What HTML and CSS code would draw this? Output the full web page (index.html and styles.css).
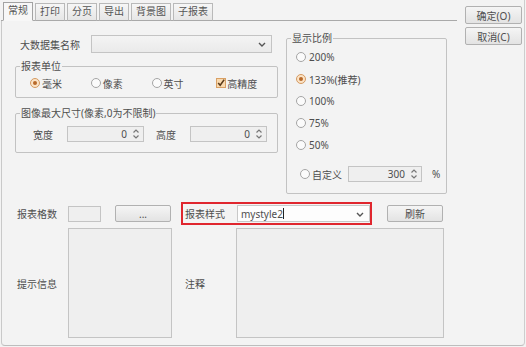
FILE: index.html
```html
<!DOCTYPE html>
<html lang="zh-CN">
<head>
  <meta charset="UTF-8">
  <title>报表属性</title>
  <link rel="stylesheet" href="styles.css">
</head>
<body>
  <div class="window">
    <div class="main">
      <div class="tabbar">
        <span class="tab active">常规</span>
        <span class="tab">打印</span>
        <span class="tab">分页</span>
        <span class="tab">导出</span>
        <span class="tab">背景图</span>
        <span class="tab">子报表</span>
      </div>

      <div class="page">
        <div class="top">
          <div class="left-col">
            <div class="name-row">
              <span class="name-label">大数据集名称</span>
              <div class="select name-select">
                <svg class="chev" width="8" height="5" viewBox="0 0 8 5"><polyline points="1,1 4,4 7,1" fill="none" stroke="#555" stroke-width="1.4"/></svg>
              </div>
            </div>

            <fieldset class="group unit">
              <legend>报表单位</legend>
              <div class="unit-row">
                <span class="opt"><i class="radio on"></i>毫米</span>
                <span class="opt"><i class="radio"></i>像素</span>
                <span class="opt"><i class="radio"></i>英寸</span>
                <span class="opt check-opt">
                  <svg class="check" width="10" height="10" viewBox="0 0 10 10"><rect x="0.5" y="0.5" width="9" height="9" fill="#f9d9ae" stroke="#d9a064"/><polyline points="2.2,5 4.2,7.2 8.2,1.6" fill="none" stroke="#5a3a1a" stroke-width="1.6"/></svg>高精度
                </span>
              </div>
            </fieldset>

            <fieldset class="group size">
              <legend>图像最大尺寸(像素,0为不限制)</legend>
              <div class="size-row">
                <span class="size-label">宽度</span>
                <div class="spin size-spin">
                  <span class="val">0</span>
                  <svg class="arrows" width="8" height="12" viewBox="0 0 8 12"><polyline points="1.5,4.5 4,2 6.5,4.5" fill="none" stroke="#777" stroke-width="1.2"/><polyline points="1.5,7.5 4,10 6.5,7.5" fill="none" stroke="#777" stroke-width="1.2"/></svg>
                </div>
                <span class="size-label second">高度</span>
                <div class="spin size-spin">
                  <span class="val">0</span>
                  <svg class="arrows" width="8" height="12" viewBox="0 0 8 12"><polyline points="1.5,4.5 4,2 6.5,4.5" fill="none" stroke="#777" stroke-width="1.2"/><polyline points="1.5,7.5 4,10 6.5,7.5" fill="none" stroke="#777" stroke-width="1.2"/></svg>
                </div>
              </div>
            </fieldset>
          </div>

          <fieldset class="group scale">
            <legend>显示比例</legend>
            <div class="scale-list">
              <div class="scale-opt"><i class="radio"></i>200%</div>
              <div class="scale-opt"><i class="radio on"></i>133%(推荐)</div>
              <div class="scale-opt"><i class="radio"></i>100%</div>
              <div class="scale-opt"><i class="radio"></i>75%</div>
              <div class="scale-opt"><i class="radio"></i>50%</div>
              <div class="custom-row">
                <span class="opt custom-opt"><i class="radio"></i>自定义</span>
                <div class="spin custom-spin">
                  <span class="val">300</span>
                  <svg class="arrows" width="8" height="12" viewBox="0 0 8 12"><polyline points="1.5,4.5 4,2 6.5,4.5" fill="none" stroke="#777" stroke-width="1.2"/><polyline points="1.5,7.5 4,10 6.5,7.5" fill="none" stroke="#777" stroke-width="1.2"/></svg>
                </div>
                <span class="pct">%</span>
              </div>
            </div>
          </fieldset>
        </div>

        <div class="style-row">
          <span class="row-label">报表格数</span>
          <div class="small-box"></div>
          <button class="btn dots">...</button>
          <div class="highlight">
            <span class="style-label">报表样式</span>
            <div class="select style-select">
              <span class="style-val">mystyle2</span><span class="caret"></span>
              <svg class="chev" width="8" height="5" viewBox="0 0 8 5"><polyline points="1,1 4,4 7,1" fill="none" stroke="#555" stroke-width="1.4"/></svg>
            </div>
          </div>
          <button class="btn refresh">刷新</button>
        </div>

        <div class="memo-row">
          <span class="row-label">提示信息</span>
          <div class="memo tip"></div>
          <span class="note-label">注释</span>
          <div class="memo note"></div>
        </div>
      </div>
    </div>

    <div class="side">
      <button class="btn side-btn">确定(O)</button>
      <button class="btn side-btn">取消(C)</button>
    </div>
  </div>
</body>
</html>
```

FILE: styles.css
```css
body {
  margin: 0;
  background: #f3f3f3;
  font-family: "Noto Sans", "Noto Sans CJK SC", sans-serif;
  font-size: 10px;
  color: #4e4e4e;
}

.window {
  display: flex;
  width: 525px;
  height: 346px;
}

.main {
  width: 456px;
  margin-left: 1px;
}

/* tab strip */
.tabbar {
  height: 21px;
  box-sizing: border-box;
  padding-left: 2px;
  display: flex;
  align-items: flex-end;
  gap: 2px;
  border-bottom: 1px solid #a9a9a9;
}

.tab {
  height: 16px;
  line-height: 15px;
  padding: 0 4px;
  margin-bottom: -1px;
  border: 1px solid #b9b9b9;
  border-bottom-color: #a9a9a9;
  background: linear-gradient(#f6f6f6, #e6e6e6);
  color: #555;
}

.tab.active {
  height: 17px;
  background: #f7f7f7;
  border-color: #a3a3a3;
  border-bottom-color: #f7f7f7;
}

.page {
  height: 325px;
  box-sizing: border-box;
  padding: 10px 0 0 13px;
  border-left: 1px solid #c9c9c9;
  border-bottom: 1px solid #bdbdbd;
  border-bottom-left-radius: 4px;
  background: #f3f3f3;
}

.top {
  display: flex;
  gap: 8px;
  align-items: flex-start;
}

.left-col {
  width: 263px;
  padding-top: 4px;
}

.name-row {
  display: flex;
  align-items: center;
  height: 18px;
}

.name-label {
  width: 71px;
  padding-left: 5px;
}

/* group boxes */
.group {
  margin: 0;
  padding: 0;
  min-width: 0;
  border: 1px solid #c2c2c2;
  border-radius: 2px;
}

.group legend {
  margin-left: 4px;
  padding: 0 1px;
  line-height: 14px;
}

.unit {
  margin-top: 6px;
}

.unit-row {
  display: flex;
  align-items: center;
  height: 14px;
  padding: 3px 0 7px 14px;
}

.opt {
  display: flex;
  align-items: center;
  width: 61px;
}

.check-opt {
  margin-left: 4px;
}

.check {
  margin-right: 1px;
}

.radio {
  display: inline-block;
  width: 8px;
  height: 8px;
  margin-right: 2px;
  border: 1px solid #a5a5a5;
  border-radius: 50%;
  background: #fbfbfb;
  position: relative;
}

.radio.on {
  border-color: #d49a62;
  background: #fbe3c6;
}

.radio.on::after {
  content: "";
  position: absolute;
  left: 2px;
  top: 2px;
  width: 4px;
  height: 4px;
  border-radius: 50%;
  background: #b8692a;
}

.size {
  margin-top: 8px;
}

.size-row {
  display: flex;
  align-items: center;
  padding: 6px 0 10px 17px;
}

.size-label {
  width: 34px;
}

.size-label.second {
  margin-left: 12px;
}

/* inputs */
.select,
.spin,
.small-box,
.memo {
  box-sizing: border-box;
  border: 1px solid #c4c4c4;
  background: #efefef;
}

.select {
  display: flex;
  align-items: center;
  height: 18px;
  position: relative;
}

.name-select {
  width: 181px;
  background: linear-gradient(#f4f4f4, #eaeaea);
}

.chev {
  position: absolute;
  right: 5px;
  top: 6px;
}

.spin {
  display: flex;
  align-items: center;
  justify-content: flex-end;
  height: 16px;
  padding-right: 3px;
}

.size-spin {
  width: 77px;
}

.val {
  margin-right: 5px;
}

.scale {
  width: 161px;
  box-sizing: border-box;
}

.scale-list {
  padding: 1px 0 11px 9px;
}

.scale-opt {
  display: flex;
  align-items: center;
  height: 22px;
}

.scale-opt .radio {
  margin-right: 3px;
}

.custom-row {
  display: flex;
  align-items: center;
  height: 16px;
  margin-top: 10px;
  padding-left: 4px;
}

.custom-opt {
  width: 48px;
}

.custom-spin {
  width: 74px;
}

.pct {
  margin-left: 10px;
}

/* bottom rows */
.style-row {
  display: flex;
  align-items: center;
  height: 23px;
  margin-top: 8px;
  padding-left: 2px;
}

.row-label {
  width: 51px;
}

.small-box {
  width: 33px;
  height: 16px;
}

.btn {
  box-sizing: border-box;
  height: 17px;
  padding: 0;
  border: 1px solid #b1b1b1;
  border-radius: 2px;
  background: linear-gradient(#f5f5f5, #e3e3e3);
  font-family: "Noto Sans", "Noto Sans CJK SC", sans-serif;
  font-size: 10px;
  color: #4e4e4e;
}

.dots {
  width: 56px;
  margin-left: 14px;
  line-height: 10px;
}

.highlight {
  display: flex;
  align-items: center;
  width: 191px;
  height: 23px;
  box-sizing: border-box;
  margin-left: 10px;
  padding-left: 2px;
  border: 2px solid #e0262e;
}

.style-label {
  width: 52px;
}

.style-select {
  width: 133px;
  height: 17px;
  background: #fdfdfd;
  border-color: #c8c8c8;
  padding-left: 3px;
}

.caret {
  width: 1px;
  height: 11px;
  background: #222;
}

.refresh {
  width: 56px;
  margin-left: 15px;
}

.memo-row {
  display: flex;
  align-items: center;
  height: 110px;
  margin-top: 3px;
  padding-left: 2px;
}

.memo {
  height: 110px;
}

.tip {
  width: 104px;
}

.note-label {
  width: 51px;
  padding-left: 13px;
}

.note {
  width: 208px;
}

/* right buttons */
.side {
  width: 68px;
  box-sizing: border-box;
  padding: 6px 0 0 8px;
  display: flex;
  flex-direction: column;
  gap: 3px;
  border-right: 1px solid #cdcdcd;
  border-bottom: 1px solid #bdbdbd;
  border-bottom-right-radius: 4px;
}

.side-btn {
  width: 57px;
  height: 18px;
}
```
